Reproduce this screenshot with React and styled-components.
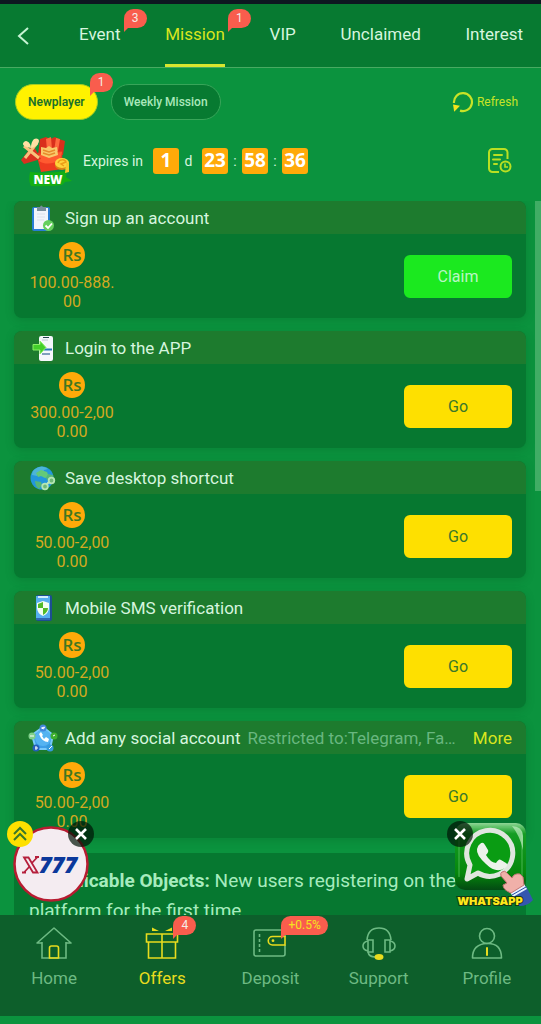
import { useState } from "react";
import styled, { createGlobalStyle } from "styled-components";

const tabs = [
  { label: "Event", badge: "3" },
  { label: "Mission", badge: "1" },
  { label: "VIP" },
  { label: "Unclaimed" },
  { label: "Interest" },
];

const missions = [
  { title: "Sign up an account", icon: ClipboardIcon, amount: ["100.00-888.", "00"], action: "Claim" },
  { title: "Login to the APP", icon: LoginIcon, amount: ["300.00-2,00", "0.00"], action: "Go" },
  { title: "Save desktop shortcut", icon: GlobeIcon, amount: ["50.00-2,00", "0.00"], action: "Go" },
  { title: "Mobile SMS verification", icon: PhoneShieldIcon, amount: ["50.00-2,00", "0.00"], action: "Go" },
  {
    title: "Add any social account",
    icon: SocialIcon,
    amount: ["50.00-2,00", "0.00"],
    action: "Go",
    note: "Restricted to:Telegram, Facebook",
  },
];

const navItems = [
  { label: "Home", icon: HomeIcon },
  { label: "Offers", icon: OffersIcon, badge: "4" },
  { label: "Deposit", icon: DepositIcon, badge: "+0.5%" },
  { label: "Support", icon: SupportIcon },
  { label: "Profile", icon: ProfileIcon },
];

const App = () => {
  const [tab, setTab] = useState("Mission");
  const [group, setGroup] = useState("Newplayer");
  const [showPromo, setShowPromo] = useState(true);
  const [showWhatsapp, setShowWhatsapp] = useState(true);

  return (
    <>
      <GlobalStyle />
      <Page>
        <Header>
          <BackButton type="button" aria-label="Back">
            <svg width="14" height="20" viewBox="0 0 14 20">
              <path d="M12 2L3 10l9 8" fill="none" stroke="currentColor" strokeWidth="2" />
            </svg>
          </BackButton>
          <Tabs>
            {tabs.map(({ label, badge }) => (
              <Tab key={label} type="button" $active={tab === label} onClick={() => setTab(label)}>
                {label}
                {badge && <TabBadge>{badge}</TabBadge>}
              </Tab>
            ))}
          </Tabs>
        </Header>

        <Main>
          <FilterRow>
            <Pill type="button" $active={group === "Newplayer"} onClick={() => setGroup("Newplayer")}>
              Newplayer
              <PillBadge>1</PillBadge>
            </Pill>
            <Pill
              type="button"
              $active={group === "Weekly Mission"}
              onClick={() => setGroup("Weekly Mission")}
            >
              Weekly Mission
            </Pill>
            <RefreshButton type="button">
              <RefreshIcon />
              Refresh
            </RefreshButton>
          </FilterRow>

          <ExpireRow>
            <GiftIcon />
            <ExpireLabel>Expires in</ExpireLabel>
            <Countdown>
              <TimeBox>1</TimeBox>
              <Separator $wide>d</Separator>
              <TimeBox>23</TimeBox>
              <Separator>:</Separator>
              <TimeBox>58</TimeBox>
              <Separator>:</Separator>
              <TimeBox>36</TimeBox>
            </Countdown>
            <RecordButton type="button" aria-label="Records">
              <RecordIcon />
            </RecordButton>
          </ExpireRow>

          <ScrollArea>
            <MissionList>
              {missions.map(({ title, icon: Icon, amount, action, note }) => (
                <Card key={title}>
                  <CardHead>
                    <Icon />
                    <CardTitle>{title}</CardTitle>
                    {note && <Note>{note}</Note>}
                    {note && <MoreLink href="#more">More</MoreLink>}
                  </CardHead>
                  <CardBody>
                    <Reward>
                      <Coin>Rs</Coin>
                      {amount.map((line) => (
                        <AmountLine key={line}>{line}</AmountLine>
                      ))}
                    </Reward>
                    <ActionButton type="button" $claim={action === "Claim"}>
                      {action}
                    </ActionButton>
                  </CardBody>
                </Card>
              ))}
            </MissionList>
            <Rules>
              <strong>I. Applicable Objects:</strong> New users registering on the platform for the
              first time
            </Rules>
            <ScrollThumb />
          </ScrollArea>

          {showPromo && (
            <PromoFloat>
              <PromoLogo />
              <ExpandButton type="button" aria-label="Expand">
                <svg width="16" height="16" viewBox="0 0 16 16">
                  <path
                    d="M2 8l6-6 6 6M2 14l6-6 6 6"
                    fill="none"
                    stroke="currentColor"
                    strokeWidth="2"
                  />
                </svg>
              </ExpandButton>
              <CloseButton type="button" aria-label="Close promo" $side="right" onClick={() => setShowPromo(false)}>
                <CrossIcon />
              </CloseButton>
            </PromoFloat>
          )}
          {showWhatsapp && (
            <WhatsappFloat>
              <WhatsappLogo />
              <CloseButton type="button" aria-label="Close WhatsApp" $side="left" onClick={() => setShowWhatsapp(false)}>
                <CrossIcon />
              </CloseButton>
            </WhatsappFloat>
          )}
        </Main>

        <BottomNav>
          {navItems.map(({ label, icon: Icon, badge }) => (
            <NavLink key={label} href={`#${label.toLowerCase()}`} $active={label === "Offers"}>
              <NavIcon>
                <Icon />
                {badge && <NavBadge $yellow={badge.length > 1}>{badge}</NavBadge>}
              </NavIcon>
              {label}
            </NavLink>
          ))}
        </BottomNav>
      </Page>
    </>
  );
};

export default App;

function RefreshIcon() {
  return (
    <svg width="22" height="22" viewBox="0 0 22 22">
      <path d="M2 12A9 9 0 1 1 8 19.600" fill="none" stroke="currentColor" strokeWidth="2.200" />
      <path d="M1 13.500l7 1.200-5.800 6z" fill="#f4e51c" />
    </svg>
  );
}

function RecordIcon() {
  return (
    <svg width="24" height="26" viewBox="0 0 24 26" fill="none" stroke="currentColor" strokeWidth="2">
      <path d="M11 24H4.500A3.500 3.500 0 0 1 1 20.500v-16A3.500 3.500 0 0 1 4.500 1h11.500a3.500 3.500 0 0 1 3.500 3.500V11" />
      <path d="M6 7h8M5 11.500h7M6 16h3" strokeLinecap="round" />
      <circle cx="17.500" cy="18.500" r="5" />
      <path d="M17 15.500v3.500h3" strokeWidth="1.600" />
    </svg>
  );
}

function GiftIcon() {
  return (
    <svg width="54" height="52" viewBox="0 0 54 52">
      <path d="M20 4l6-2 4 2 5-2 4 2 6 2-2 14H18z" fill="#d92f1c" />
      <path d="M26 4l5-2 1 13h-5zM36 3l4 1-2 12h-4z" fill="#ff6a3f" />
      <path d="M16 18l26-2 1 18-22 3z" fill="#ee3b20" />
      <path d="M18 20l24-3-2 8c-6 4-15 5-21 1z" fill="#ff5a30" />
      <path d="M21 12l5 1 3-2 3 2 5-1 1 8-9 3-8-3z" fill="#f9c96b" />
      <path d="M23 15l6 2 6-2M23 18l6 2 6-2" stroke="#e88a2b" strokeWidth="1.500" fill="none" />
      <path d="M1 25l12-15 8 14-17 5z" fill="#d93120" />
      <path d="M5 23L17 8M4 11l15 12" stroke="#f8c27c" strokeWidth="3" />
      <path d="M11 13C5 12 1 10 4 7s7 2 7 6zM11 13c0-8 4-11 7-9s-1 8-7 9z" fill="#ffe0a4" />
      <ellipse cx="42" cy="30" rx="7" ry="5" fill="#dc8715" />
      <ellipse cx="42" cy="28" rx="7" ry="5" fill="#ffd33c" />
      <path d="M38 28c1-4 7-4 8-1l-5 2 3 2" stroke="#ed9e18" strokeWidth="1.500" fill="none" />
      <path d="M10 37q16 2 37-1l-1 6 6 4-7 1-3 3q-16 2-31 1-3-5-1-14z" fill="#14af13" />
      <path d="M46 28l3 0v9l-4 1z" fill="#f6c930" />
      <text x="28" y="49" textAnchor="middle" fill="#fff" fontFamily="'Open Sans', sans-serif" fontWeight="800" fontSize="12">
        NEW
      </text>
    </svg>
  );
}

function ClipboardIcon() {
  return (
    <svg width="26" height="28" viewBox="0 0 26 28">
      <rect x="2" y="3" width="18" height="24" rx="2" fill="#287ed5" />
      <path d="M4 4h14v21H4z" fill="#f2f5fb" />
      <path d="M7 3h3q1-3 3 0h3v4H7z" fill="#788e9e" />
      <path d="M7 10h8M7 13h8M7 16h7" stroke="#dce1ec" />
      <circle cx="18.500" cy="21.500" r="5.500" fill="#64cf5d" />
      <path d="M15.500 21.500l2.500 2.500 4-4.500" stroke="#fff" strokeWidth="1.800" fill="none" />
    </svg>
  );
}

function LoginIcon() {
  return (
    <svg width="26" height="28" viewBox="0 0 26 28">
      <rect x="9" y="2" width="14" height="25" rx="2" fill="#f5f7fb" />
      <path d="M13 3h6v1h-6z" fill="#27414f" />
      <path d="M12 6h6" stroke="#bcc4d2" />
      <path d="M14 15.500h8" stroke="#2878b7" strokeWidth="2" />
      <path d="M12 20h8" stroke="#7f9fbd" strokeWidth="2" />
      <path d="M3 10.500h7V7l6 6.500-6 6.500v-4H3z" fill="#43ce2b" stroke="#87ef65" />
    </svg>
  );
}

function GlobeIcon() {
  return (
    <svg width="26" height="28" viewBox="0 0 26 28">
      <circle cx="12" cy="14" r="11.500" fill="#2397dc" />
      <path d="M5 5q7-5 13 0l-4 1-1 3-4-1-2 4-5-1q0-4 3-6z" fill="#4cb5d8" />
      <path d="M6 9l5-3 6 2 2 5-4 1-4-2-3 1z" fill="#63c979" />
      <path d="M5 17l6 1 1 3-3 4q-4-3-4-8zM18 10l5 1q1 4 0 6l-4 1-3-4z" fill="#55b779" />
      <path d="M15 22l6-6" stroke="#c8e9bf" strokeWidth="2" />
      <circle cx="15" cy="22.500" r="2.800" fill="#70b977" stroke="#b4e6b4" strokeWidth="1.800" />
      <circle cx="21.500" cy="16.500" r="2.800" fill="#70b977" stroke="#b4e6b4" strokeWidth="1.800" />
    </svg>
  );
}

function PhoneShieldIcon() {
  return (
    <svg width="26" height="28" viewBox="0 0 26 28">
      <rect x="6" y="1" width="16" height="26" rx="2" fill="#1c4e91" />
      <path d="M6 2h14v22H6z" fill="#55aff0" />
      <path d="M8 2h10v2H8z" fill="#d2edff" />
      <path d="M13 7l6 2v5q0 5-6 8-6-3-6-8V9z" fill="#f3fff0" />
      <path d="M13 8v6H8v-4zM13 14h5q0 4-5 7z" fill="#51ba28" />
      <path d="M6 25h14" stroke="#4182d3" />
    </svg>
  );
}

function SocialIcon() {
  return (
    <svg width="26" height="28" viewBox="0 0 26 28" overflow="visible">
      <path d="M13 3l10 8-3 14H6L2 11z" fill="#3c9ee7" stroke="#78c9fa" strokeWidth="2" strokeLinejoin="round" />
      <circle cx="13" cy="14" r="8" fill="#54b3f1" />
      <path d="M9 10q3 8 9 8l1-3-3-2-2 2-2-3 1-1-2-3z" fill="#fff" />
      <circle cx="13" cy="4" r="3.500" fill="#4287db" />
      <circle cx="2" cy="12" r="3.500" fill="#7fd08a" />
      <circle cx="24" cy="12" r="3.500" fill="#3eaf2f" />
      <circle cx="6" cy="24" r="3.500" fill="#245fbb" />
      <circle cx="20" cy="24" r="3.500" fill="#359bdd" />
      <path d="M11.500 4l3-1-1 2zM0 12h4M23 12l2-1M6 22v4M5 24h3M19 25l3-3" stroke="#fff" fill="none" />
    </svg>
  );
}

function CrossIcon() {
  return (
    <svg width="12" height="12" viewBox="0 0 12 12">
      <path d="M1 1l10 10M11 1L1 11" stroke="#fff" strokeWidth="2.600" />
    </svg>
  );
}

function PromoLogo() {
  return (
    <svg width="76" height="76" viewBox="0 0 76 76">
      <circle cx="38" cy="38" r="36.500" fill="#f4ecf1" stroke="#b71c31" strokeWidth="2.500" />
      <g fill="none" stroke="#b51f3c" strokeWidth="1.800">
        <path d="M24.500 31l-7 7.500M17 40l-6.500 7M22 31h4M9 46.500h4" />
        <path d="M11 31.500h4.500l9 15H20z" fill="#f4ecf1" />
      </g>
      <text
        x="26"
        y="47"
        fill="#0b389b"
        fontFamily="'Open Sans', sans-serif"
        fontStyle="italic"
        fontWeight="800"
        fontSize="22"
      >
        777
      </text>
    </svg>
  );
}

function WhatsappLogo() {
  return (
    <svg width="80" height="88" viewBox="0 0 80 88">
      <defs>
        <linearGradient id="tile" x1="0" y1="0" x2="0" y2="1">
          <stop offset="0" stopColor="#8fd695" />
          <stop offset=".16" stopColor="#159d24" />
          <stop offset=".75" stopColor="#05870b" />
          <stop offset="1" stopColor="#034a13" />
        </linearGradient>
      </defs>
      <rect x="1" y="1" width="71" height="67" rx="10" fill="url(#tile)" />
      <path d="M5 55V14q0-9 9-9h46q8 0 8 8v42" fill="none" stroke="#5fc568" strokeWidth="1.500" opacity=".5" />
      <path d="M58 4q10 0 11 10v14q-3-14-11-24z" fill="#c1edc2" opacity=".7" />
      <path
        d="M16 43a23 23 0 1 1 8 8l-11 6z"
        fill="#0a9c13"
        stroke="#e0e6df"
        strokeWidth="5"
        strokeLinejoin="round"
      />
      <path
        d="M26 22q3-3 5 1l3 5q1 2-2 5 4 7 10 8 3-5 5-3l5 3q3 2-1 5-9 6-19-4-10-9-9-15 1-4 3-5z"
        fill="#edf2eb"
      />
      <path d="M57 71l15-7 7 14q-5 6-14 6z" fill="#3456ae" />
      <path d="M56 70l14-8 3 5-14 8z" fill="#e6f1ff" />
      <path d="M58 73l14-8" stroke="#244da5" />
      <path
        d="M48 50q3-2 5 1l5 5q2-5 8-4l3 3 1 8-13 8q-8-3-8-8l4-2-6-7q-1-3 1-4z"
        fill="#f0b0a9"
        stroke="#c47472"
      />
      <text
        x="36"
        y="83"
        textAnchor="middle"
        fill="#ffe81a"
        stroke="#163613"
        strokeWidth="2"
        paintOrder="stroke"
        fontFamily="Inter, sans-serif"
        fontWeight="900"
        fontSize="11"
      >
        WHATSAPP
      </text>
    </svg>
  );
}

function HomeIcon() {
  return (
    <svg width="36" height="34" viewBox="0 0 36 34" fill="none" stroke="currentColor" strokeWidth="1.600">
      <path d="M6 16v16h24V16" />
      <path d="M6 17H1L18 2l17 15h-5" strokeLinejoin="round" />
      <path d="M13.500 32V22q0-2 2-2h5q2 0 2 2v10z" stroke="#e8dc1e" />
    </svg>
  );
}

function OffersIcon() {
  return (
    <svg width="36" height="34" viewBox="0 0 36 34" fill="none" stroke="currentColor" strokeWidth="1.600">
      <path d="M2.500 8h31v8h-31zM4.500 16v16h27V16M18 8v24" />
      <path d="M8 5V1.500l7 3.500zM28 5V1.500L21 5z" fill="currentColor" stroke="none" />
    </svg>
  );
}

function DepositIcon() {
  return (
    <svg width="36" height="34" viewBox="0 0 36 34" fill="none" stroke="currentColor" strokeWidth="1.600">
      <path d="M33 11V6q0-2-2-2H4Q2 4 2 6v22q0 2 2 2h27q2 0 2-2v-9" />
      <path d="M7.500 8v18" strokeDasharray="3 2" />
      <path d="M33 10.500H20.500a4.200 4.200 0 0 0 0 8.500H33z" stroke="#e8dc1e" />
      <circle cx="21" cy="14.700" r="1.400" fill="#e8dc1e" stroke="none" />
    </svg>
  );
}

function SupportIcon() {
  return (
    <svg width="36" height="34" viewBox="0 0 36 34" fill="none" stroke="currentColor" strokeWidth="1.600">
      <path d="M6 14q1-12 12-12t12 12" />
      <path d="M7 14h5v12H7zM24 14h5v12h-5z" />
      <path d="M7 15q-5 1-5 5t5 5M29 15q5 1 5 5t-5 5M7 26q1 5 7 5" />
      <ellipse cx="18" cy="31" rx="4.500" ry="3" fill="#e8dc1e" stroke="none" />
    </svg>
  );
}

function ProfileIcon() {
  return (
    <svg width="36" height="34" viewBox="0 0 36 34" fill="none" stroke="currentColor" strokeWidth="1.600">
      <circle cx="18" cy="10" r="7.500" />
      <path d="M3.500 32q0-14 14.500-14.500T32.500 32z" strokeLinejoin="round" />
      <path d="M18 22v7" stroke="#e8dc1e" strokeWidth="2" strokeLinecap="round" />
    </svg>
  );
}

const GlobalStyle = createGlobalStyle`
  * {
    box-sizing: border-box;
  }

  body {
    margin: 0;
    background: #0b933e;
    font-family: Roboto, "Liberation Sans", sans-serif;
  }

  button {
    border: none;
    padding: 0;
    background: none;
    font-family: inherit;
    cursor: pointer;
  }

  a {
    text-decoration: none;
  }

  svg {
    display: block;
    flex-shrink: 0;
  }
`;

const Page = styled.div`
  display: flex;
  flex-direction: column;
  height: 100vh;
  border-top: 4px solid #0d1720;
  border-bottom: 8px solid #0b933e;
`;

const Header = styled.header`
  display: flex;
  height: 64px;
  padding: 0 18px 0 16px;
  background: #077a31;
  border-bottom: 1px solid #48aa61;
`;

const BackButton = styled.button`
  width: 63px;
  color: #c5f4d3;
`;

const Tabs = styled.nav`
  display: flex;
  flex: 1;
  justify-content: space-between;
`;

const Tab = styled.button`
  position: relative;
  padding-bottom: ${({ $active }) => ($active ? "0" : "3px")};
  border-bottom: ${({ $active }) => ($active ? "3px solid #d8e62f" : "none")};
  font-size: 17px;
  color: ${({ $active }) => ($active ? "#d9e51e" : "#d6f5df")};
`;

const Badge = styled.span`
  position: absolute;
  min-width: 23px;
  height: 19px;
  padding: 0 7px;
  border-radius: 10px 10px 10px 0;
  background: #f95d4d;
  color: #f5ece6;
  font-size: 12px;
  font-weight: 400;
  line-height: 19px;
  text-align: center;

  &::after {
    content: "";
    position: absolute;
    left: 0;
    top: 18px;
    border-top: 5px solid #f95d4d;
    border-right: 5px solid transparent;
  }
`;

const TabBadge = styled(Badge)`
  left: calc(100% + 3px);
  top: 5px;
`;

const PillBadge = styled(Badge)`
  right: -16px;
  top: -12px;
`;

const NavBadge = styled(Badge)`
  left: 29px;
  top: -10px;
  color: ${({ $yellow }) => ($yellow ? "#f5e31c" : "#f5ece6")};
`;

const Main = styled.main`
  position: relative;
  display: flex;
  flex: 1;
  flex-direction: column;
  min-height: 0;
`;

const FilterRow = styled.div`
  display: flex;
  gap: 13px;
  padding: 16px 23px 0 15px;
`;

const Pill = styled.button`
  position: relative;
  height: 36px;
  padding: 0 12px;
  border: 1px solid ${({ $active }) => ($active ? "#a4cc22" : "#38a559")};
  border-radius: 18px;
  background: ${({ $active }) => ($active ? "#fff200" : "#077a31")};
  color: ${({ $active }) => ($active ? "#19702b" : "#a9e8bb")};
  font-size: 12px;
  font-weight: ${({ $active }) => ($active ? "600" : "500")};
`;

const RefreshButton = styled.button`
  display: flex;
  align-items: center;
  gap: 3px;
  margin-left: auto;
  color: #c8e327;
  font-size: 12px;
`;

const ExpireRow = styled.div`
  display: flex;
  align-items: center;
  height: 52px;
  margin: 15px 0 14px;
  padding: 0 29px 0 20px;
`;

const ExpireLabel = styled.span`
  margin: 0 8px 0 9px;
  color: #d6f5df;
  font-size: 14px;
`;

const Countdown = styled.div`
  display: flex;
  align-items: center;
  padding-left: 2px;
`;

const TimeBox = styled.b`
  width: 26px;
  height: 26px;
  border-radius: 3px;
  background: #ffaa09;
  color: #fff;
  font-family: "Open Sans", sans-serif;
  font-size: 19px;
  line-height: 24px;
  text-align: center;
`;

const Separator = styled.span`
  width: ${({ $wide }) => ($wide ? "23px" : "14px")};
  padding-right: ${({ $wide }) => ($wide ? "4px" : "0")};
  color: #d6f5df;
  font-size: 14px;
  text-align: center;
`;

const RecordButton = styled.button`
  margin-left: auto;
  color: #b9df22;
`;

const ScrollArea = styled.div`
  position: relative;
  flex: 1;
  min-height: 0;
  padding: 0 15px 0 14px;
  overflow: hidden;
`;

const ScrollThumb = styled.div`
  position: absolute;
  top: 0;
  right: 0;
  width: 6px;
  height: 290px;
  background: #40ad65;
`;

const MissionList = styled.div`
  display: grid;
  gap: 13px;
`;

const Card = styled.section`
  min-width: 0;
  overflow: hidden;
  border-radius: 8px;
  background: #067830;
  box-shadow: 0 2px 8px rgba(0, 80, 30, 0.25);
`;

const CardHead = styled.div`
  display: flex;
  align-items: center;
  height: 33px;
  padding: 0 14px 0 16px;
  background: #1d7b2e;
  font-size: 17px;
`;

const CardTitle = styled.h2`
  margin: 0 7px 0 9px;
  color: #d6f5df;
  font-size: 17px;
  font-weight: 400;
  white-space: nowrap;
`;

const Note = styled.span`
  flex: 1;
  overflow: hidden;
  color: #69b780;
  text-overflow: ellipsis;
  white-space: nowrap;
`;

const MoreLink = styled.a`
  margin-left: 9px;
  color: #d9e51e;
`;

const CardBody = styled.div`
  display: flex;
  align-items: center;
  justify-content: space-between;
  height: 84px;
  padding: 0 14px;
`;

const Reward = styled.div`
  display: flex;
  flex-direction: column;
  align-items: center;
  width: 88px;
`;

const Coin = styled.span`
  width: 26px;
  height: 26px;
  margin-bottom: 5px;
  border-radius: 50%;
  background: #ffaa09;
  color: #3f7722;
  font-family: "Open Sans", sans-serif;
  font-size: 17px;
  font-weight: 600;
  line-height: 26px;
  text-align: center;
`;

const AmountLine = styled.span`
  color: #d3aa20;
  font-size: 16px;
  line-height: 19px;
`;

const ActionButton = styled.button`
  width: 108px;
  height: 43px;
  border-radius: 6px;
  background: ${({ $claim }) => ($claim ? "#1be91f" : "#fee000")};
  color: ${({ $claim }) => ($claim ? "#b9f6c4" : "#39772b")};
  font-size: 16px;
`;

const Rules = styled.div`
  margin-top: 15px;
  padding: 13px 15px;
  border-radius: 8px;
  background: #067830;
  color: #a6ecbe;
  font-size: 19px;
  line-height: 30px;
`;

const PromoFloat = styled.div`
  position: absolute;
  left: 13px;
  bottom: 13px;
`;

const WhatsappFloat = styled.div`
  position: absolute;
  right: 7px;
  bottom: 5px;
`;

const ExpandButton = styled.button`
  position: absolute;
  left: -6px;
  top: -5px;
  display: grid;
  place-items: center;
  width: 26px;
  height: 26px;
  border-radius: 50%;
  background: #fee000;
  color: #39772b;
`;

const CloseButton = styled.button`
  position: absolute;
  ${({ $side }) => ($side === "left" ? "left: -7px; top: -1px;" : "right: -5px; top: -5px;")}
  display: grid;
  place-items: center;
  width: 26px;
  height: 26px;
  border-radius: 50%;
  background: rgba(0, 20, 5, 0.7);
`;

const BottomNav = styled.nav`
  display: grid;
  grid-template-columns: repeat(5, 1fr);
  height: 101px;
  padding-top: 11px;
  background: #0d5f2b;
`;

const NavLink = styled.a`
  display: flex;
  flex-direction: column;
  align-items: center;
  gap: 8px;
  color: ${({ $active }) => ($active ? "#e8dc1e" : "#6dba83")};
  font-size: 17px;
`;

const NavIcon = styled.span`
  position: relative;
`;
